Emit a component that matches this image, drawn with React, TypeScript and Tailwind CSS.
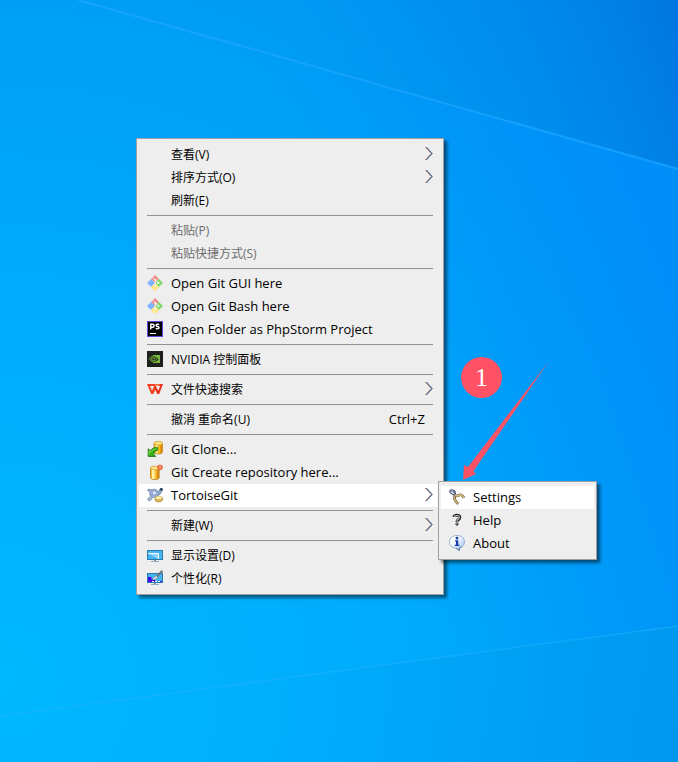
import type { ReactNode } from "react";

const icon = "h-4 w-4 shrink-0";

function GitIcon() {
  return (
    <svg className={icon} viewBox="0 0 16 16" aria-hidden="true">
      <path d="M8 0 L12 3.9 L8 7.8 L4 3.9Z" fill="#f28c8c" />
      <path d="M4 4 L8 8 L4 12 L0 8Z" fill="#80b3ff" />
      <path d="M12 4 L16 8 L12 12 L8 8Z" fill="#80d968" />
      <path d="M8 8.2 L12 12 L8 16 L4 12Z" fill="#ffe680" />
      <path d="M5.6 2.2 L8.4 5 V11 M8.4 5 L11.4 8" stroke="#f4f4f4" strokeWidth="0.9" fill="none" />
      <circle cx="8.4" cy="5" r="1" fill="#fff" />
      <circle cx="8.4" cy="11" r="1" fill="#fff" />
      <circle cx="11.4" cy="8" r="1" fill="#fff" />
    </svg>
  );
}

function PhpStormIcon() {
  return (
    <svg className={icon} viewBox="0 0 16 16" aria-hidden="true">
      <rect width="16" height="16" fill="#5a4be0" />
      <rect x="1" y="1" width="14" height="14" fill="#000" />
      <path
        d="M3.8 8.5 V3.3 H5.8 Q7.1 3.3 7.1 4.8 Q7.1 6.3 5.8 6.3 H4.2 M12.2 3.8 Q11.4 3.1 10.3 3.2 Q9.1 3.3 9.2 4.4 Q9.3 5.3 10.6 5.5 Q12.2 5.8 12.1 6.8 Q12 7.9 10.6 7.9 Q9.5 7.9 8.8 7.2"
        stroke="#fff" strokeWidth="1.4" fill="none"
      />
      <rect x="3" y="12" width="6" height="1" fill="#fff" />
    </svg>
  );
}

function NvidiaIcon() {
  return (
    <svg className={icon} viewBox="0 0 16 16" aria-hidden="true">
      <rect width="16" height="16" fill="#1d1f1d" />
      <path d="M6 4 H13 V12 H6 V11 Q10 11 11.6 8.6 Q9.6 5.5 6 5.2Z" fill="#76b43c" />
      <path d="M6 5.2 Q3.6 5.5 2.3 7.5 Q3.6 10.7 6.4 11 M6 6.7 Q4.5 6.9 4 7.7 Q4.8 9.4 6.5 9.7 Q8.6 9.8 9.8 8.4 Q8.4 6.6 6 6.7 M6.2 7.7 Q7.2 7.7 7.7 8.5" stroke="#76b43c" strokeWidth="0.9" fill="none" />
    </svg>
  );
}

function WpsIcon() {
  return (
    <svg className={icon} viewBox="0 0 16 16" aria-hidden="true">
      <path d="M0 3 H8.4 L7.6 5 H3 L5 9.8 L7.6 3.8 L9.2 7.4 L6.2 13 H4.2Z" fill="#f5411f" />
      <path d="M8.4 3 H16 L12.2 13 H10.2 L7.2 6 L8.6 4.4 L11.2 9.8 L13.2 5 H9.3Z" fill="#e8301c" />
      <path d="M8 3 H12.8 L12 5 H8.8Z" fill="#ff7448" />
    </svg>
  );
}

function CloneIcon() {
  return (
    <svg className={icon} viewBox="0 0 16 16" aria-hidden="true">
      <path d="M7 2.3 V11 Q7 13 11.3 13 Q15.6 13 15.6 11 V2.3Z" fill="#f2b91b" stroke="#ad6b08" strokeWidth="0.6" />
      <path d="M8.5 3.6 V11.8 Q9.6 12.4 10.8 12.4 V3.6Z" fill="#fff0a0" />
      <path d="M13.3 3.6 V12.3 L15.3 11 V3Z" fill="#dd8b10" />
      <ellipse cx="11.3" cy="2.2" rx="4.3" ry="1.9" fill="#ffe27a" stroke="#c58a18" strokeWidth="0.6" />
      <path d="M10.6 6.6 Q5.6 6.2 3.6 9.8 L1.2 7.8 V15.4 H8.8 L6.4 13 Q7.6 10 10.6 9.2Z" fill="#37ad18" stroke="#0f6b08" strokeWidth="0.8" />
      <path d="M9.4 7.6 Q6 7.8 4.2 11 L2.2 9.8 V13.6" stroke="#93e85c" strokeWidth="0.9" fill="none" />
    </svg>
  );
}

function CreateIcon() {
  return (
    <svg className={icon} viewBox="0 0 16 16" aria-hidden="true">
      <path d="M3.5 4 V13.5 Q3.5 15.5 7.8 15.5 Q12.2 15.5 12.2 13.5 V4Z" fill="#f4bd30" stroke="#b56f0c" strokeWidth="0.7" />
      <path d="M5 5.5 V14.4 Q6 15 7.6 15 V5.5Z" fill="#fff1a6" />
      <path d="M10 5.5 V15 L11.9 14 V4.5Z" fill="#dc8512" />
      <ellipse cx="7.8" cy="4" rx="4.3" ry="1.9" fill="#ffe488" stroke="#c98e1c" strokeWidth="0.6" />
      <path d="M13 0.4 V6.4 M10 3.4 H16 M10.8 1.2 L15.2 5.6 M15.2 1.2 L10.8 5.6" stroke="#f2562e" strokeWidth="1.2" />
      <circle cx="13" cy="3.4" r="1.1" fill="#ffb48c" />
    </svg>
  );
}

function TortoiseIcon() {
  return (
    <svg className={icon} viewBox="0 0 16 16" aria-hidden="true">
      <path d="M3.6 4.6 L0.6 3.6 L1.2 2.2 L5 3 M3 9.4 L0.6 12 L1.8 13.8 L3.8 13 L5.6 10.5" fill="#a9bdd3" stroke="#587393" strokeWidth="0.7" />
      <path d="M11.4 7 L12 3.8 Q12.4 1.2 14.4 1.2 Q16 2.2 15 4 L13 7.4Z" fill="#9db4ce" stroke="#486484" strokeWidth="0.6" />
      <circle cx="14.4" cy="2.4" r="1.3" fill="#1c3654" />
      <ellipse cx="7.2" cy="6.4" rx="4.6" ry="4" fill="#a3b6de" stroke="#6c84ae" strokeWidth="0.8" />
      <path d="M5 4.6 L7.4 3.8 L9.6 5.2 L9 7.8 L5.8 8Z" fill="#dfe7f6" stroke="#7890ba" strokeWidth="0.7" />
      <path d="M3 7.4 L5.8 8 M9 7.8 L11.4 8.4 M7.4 3.8 V2.6" stroke="#7890ba" strokeWidth="0.7" />
      <path d="M8.2 11 V13.2 Q8.2 14.8 11.6 14.8 Q15.4 14.6 15.4 12.8 V10.4Z" fill="#e6bd55" stroke="#987026" strokeWidth="0.7" />
      <ellipse cx="11.8" cy="10.8" rx="3.6" ry="1.8" fill="#fff0ad" stroke="#bd9747" strokeWidth="0.5" />
    </svg>
  );
}

function DisplayIcon() {
  return (
    <svg className={icon} viewBox="0 0 16 16" aria-hidden="true">
      <rect x="0.5" y="3.5" width="15" height="9" fill="#46b5ef" stroke="#2a7ab0" />
      <path d="M1 6.5 H11.5 V12" stroke="#fff" fill="#8fd4fa" />
      <rect x="7" y="13" width="2" height="1" fill="#8294a4" />
      <rect x="4" y="14" width="8" height="1" fill="#9aacba" />
    </svg>
  );
}

function PersonalizeIcon() {
  return (
    <svg className={icon} viewBox="0 0 16 16" aria-hidden="true">
      <rect x="0.5" y="3.5" width="15" height="9" fill="#3fb4ee" stroke="#2a7ab0" />
      <path d="M1 7 H4.5 V9.5 H8 V12 H1Z" fill="#4a00e6" />
      <path d="M5 11.5 H14" stroke="#fff" strokeDasharray="2 1" />
      <path d="M13 11.5 H15" stroke="#6b08e6" />
      <path d="M15.4 0.8 L9.2 7.2" stroke="#6d7880" strokeWidth="2.1" />
      <path d="M9.6 6 Q7 6 5.4 9.4 Q9.4 10.4 10.6 7.4Z" fill="#d9dee2" stroke="#6e7d88" strokeWidth="0.5" />
      <rect x="7" y="13" width="2" height="1" fill="#8294a4" />
      <rect x="4" y="14" width="8" height="1" fill="#9aacba" />
    </svg>
  );
}

function SettingsIcon() {
  return (
    <svg className={icon} viewBox="0 0 16 16" aria-hidden="true">
      <path d="M7 5.4 Q4.4 8.4 6 11 Q7 13.2 9.4 14.8" stroke="#735a36" strokeWidth="2.6" fill="none" />
      <path d="M7 5.4 Q4.4 8.4 6 11 Q7 13.2 9.4 14.8" stroke="#d9bd83" strokeWidth="1.4" fill="none" />
      <path d="M5.4 5.6 Q8 8 10 6.2 Q12.6 4.6 15 9" stroke="#735a36" strokeWidth="2.6" fill="none" />
      <path d="M5.4 5.6 Q8 8 10 6.2 Q12.6 4.6 15 9" stroke="#e0c58c" strokeWidth="1.4" fill="none" />
      <path d="M0.8 1.5 L2.8 0.5 L6 1.8 L6.6 5.2 L4 6 L0.7 3.4Z" fill="#7181a0" stroke="#3a435e" strokeWidth="0.8" />
      <path d="M1.5 2.8 L5.3 5 M3 1.2 L3.6 4.8" stroke="#dce5f4" strokeWidth="0.8" />
    </svg>
  );
}

function HelpIcon() {
  return (
    <svg className={icon} viewBox="0 0 16 16" aria-hidden="true">
      <path d="M5 5 Q5 3.3 8 3.3 Q11 3.4 10.8 5.6 Q10.7 7 9 7.8 Q8 8.4 8 10" stroke="#222" strokeWidth="3" fill="none" />
      <path d="M5.4 4.9 Q5.4 3.5 8 3.5 Q10.5 3.6 10.4 5.5 Q10.3 6.8 8.8 7.5 Q8 8 8 9.7" stroke="#c9c9c9" strokeWidth="1.1" fill="none" />
      <circle cx="8" cy="12.1" r="1.2" fill="#bbb" stroke="#222" strokeWidth="0.9" />
    </svg>
  );
}

function AboutIcon() {
  return (
    <svg className={icon} viewBox="0 0 16 16" aria-hidden="true">
      <defs>
        <linearGradient id="bubble" x1="0" y1="0" x2="1" y2="1">
          <stop offset="0.35" stopColor="#fff" />
          <stop offset="1" stopColor="#8eb9ed" />
        </linearGradient>
      </defs>
      <path d="M8 0.5 Q15.5 0.8 15.5 7 Q15.4 11.6 10.4 12.9 L10.6 15.6 L7 13.2 Q0.6 12.5 0.5 7 Q0.6 0.8 8 0.5Z" fill="url(#bubble)" stroke="#91abcb" strokeWidth="0.9" />
      <path d="M12.8 11.6 L10.4 12.9 L10.6 15.6 L7 13.2" stroke="#4c76ac" strokeWidth="0.9" fill="none" />
      <circle cx="8" cy="3.2" r="1.4" fill="#113da8" />
      <path d="M6 5.3 H9.2 V9.8 H10.4 V11 H5.8 V9.8 H7 V6.4 H6Z" fill="#113da8" />
    </svg>
  );
}

function Chevron() {
  return (
    <svg className="h-[17px] w-2 shrink-0" viewBox="0 0 8 17" fill="none" aria-hidden="true">
      <path d="M0.3 1 L6.2 7.5 L0.3 14" stroke="#e79a4c" strokeWidth="0.8" />
      <path d="M1.5 1 L7.4 7.5 L1.5 14" stroke="#3f94e6" strokeWidth="0.9" />
      <path d="M0.9 1 L6.8 7.5 L0.9 14" stroke="#3b2450" strokeWidth="0.7" />
    </svg>
  );
}

type ItemProps = {
  label: string;
  icon?: ReactNode;
  shortcut?: string;
  more?: boolean;
  active?: boolean;
  disabled?: boolean;
};

function Item({ label, icon: glyph, shortcut, more, active, disabled }: ItemProps) {
  const latin = /^[A-Za-z. ]+$/.test(label);
  return (
    <button
      type="button"
      role="menuitem"
      disabled={disabled}
      aria-haspopup={more ? "menu" : undefined}
      className={`flex h-[23px] w-full items-center gap-2 px-2 text-left whitespace-nowrap ${
        active ? "bg-white" : "hover:bg-white"
      } ${disabled ? "text-[#6d6d6d]" : "text-black"} ${latin ? "text-[13px]" : "text-[12px]"}`}
    >
      <span className="flex w-4 shrink-0 pb-px">{glyph}</span>
      <span className="flex-1">{label}</span>
      {shortcut && <span className="pr-2 text-[13px]">{shortcut}</span>}
      {more && <Chevron />}
    </button>
  );
}

function Separator() {
  return (
    <div role="separator" className="px-2 py-[3px]">
      <div className="h-px bg-[#919191]" />
    </div>
  );
}

function Menu({ label, className, children }: { label: string; className: string; children: ReactNode }) {
  return (
    <div
      role="menu"
      aria-label={label}
      className={`absolute border border-[#a0a0a0] bg-[#eeeeee] px-[2px] py-1 shadow-[3px_3px_3px_rgba(0,0,0,0.5)] ${className}`}
    >
      {children}
    </div>
  );
}

function Wallpaper() {
  return (
    <svg className="absolute inset-0 h-full w-full" viewBox="0 0 678 762" preserveAspectRatio="none" aria-hidden="true">
      <defs>
        <radialGradient id="base" gradientUnits="userSpaceOnUse" cx="0" cy="680" r="900">
          <stop offset="0" stopColor="#00b8ff" />
          <stop offset="0.4" stopColor="#00acfd" />
          <stop offset="0.75" stopColor="#009ff6" />
          <stop offset="1" stopColor="#0094f2" />
        </radialGradient>
        <linearGradient id="corner" gradientUnits="userSpaceOnUse" x1="300" y1="140" x2="678" y2="0">
          <stop offset="0" stopColor="#0090ee" stopOpacity="0.1" />
          <stop offset="0.6" stopColor="#0086e8" stopOpacity="0.65" />
          <stop offset="1" stopColor="#0076e0" />
        </linearGradient>
        <linearGradient id="right" gradientUnits="userSpaceOnUse" x1="380" y1="400" x2="678" y2="300">
          <stop offset="0" stopColor="#008efb" stopOpacity="0" />
          <stop offset="1" stopColor="#008cfa" stopOpacity="0.8" />
        </linearGradient>
        <linearGradient id="floor" gradientUnits="userSpaceOnUse" x1="250" y1="680" x2="678" y2="762">
          <stop offset="0" stopColor="#00a4f2" stopOpacity="0" />
          <stop offset="1" stopColor="#0094ec" stopOpacity="0.7" />
        </linearGradient>
        <linearGradient id="ray" gradientUnits="userSpaceOnUse" x1="78" y1="0" x2="678" y2="169">
          <stop offset="0" stopColor="#22a8fb" stopOpacity="0.6" />
          <stop offset="1" stopColor="#12a0ff" />
        </linearGradient>
      </defs>
      <rect width="678" height="762" fill="url(#base)" />
      <path d="M78 0 L678 169 V626 L0 716 V0Z" fill="url(#right)" />
      <path d="M78 0 L678 169 V0Z" fill="url(#corner)" />
      <path d="M0 716 L678 626 V762 H0Z" fill="url(#floor)" />
      <path d="M78 0 L678 169" stroke="url(#ray)" strokeWidth="2" />
      <path d="M0 716 L678 626" stroke="#22b4ff" strokeWidth="1.5" strokeOpacity="0.5" />
    </svg>
  );
}

export default function App() {
  return (
    <main className="relative h-screen min-h-[620px] w-full overflow-hidden bg-[#00a2fa] font-['Open_Sans','Noto_Sans_CJK_SC',sans-serif]">
      <Wallpaper />

      <Menu label="Desktop" className="top-[138px] left-[136px] w-[308px]">
        <Item label="查看(V)" more />
        <Item label="排序方式(O)" more />
        <Item label="刷新(E)" />
        <Separator />
        <Item label="粘贴(P)" disabled />
        <Item label="粘贴快捷方式(S)" disabled />
        <Separator />
        <Item label="Open Git GUI here" icon={<GitIcon />} />
        <Item label="Open Git Bash here" icon={<GitIcon />} />
        <Item label="Open Folder as PhpStorm Project" icon={<PhpStormIcon />} />
        <Separator />
        <Item label="NVIDIA 控制面板" icon={<NvidiaIcon />} />
        <Separator />
        <Item label="文件快速搜索" icon={<WpsIcon />} more />
        <Separator />
        <Item label="撤消 重命名(U)" shortcut="Ctrl+Z" />
        <Separator />
        <Item label="Git Clone..." icon={<CloneIcon />} />
        <Item label="Git Create repository here..." icon={<CreateIcon />} />
        <Item label="TortoiseGit" icon={<TortoiseIcon />} more active />
        <Separator />
        <Item label="新建(W)" more />
        <Separator />
        <Item label="显示设置(D)" icon={<DisplayIcon />} />
        <Item label="个性化(R)" icon={<PersonalizeIcon />} />
      </Menu>

      <Menu label="TortoiseGit" className="top-[481px] left-[438px] w-[159px]">
        <Item label="Settings" icon={<SettingsIcon />} active />
        <Item label="Help" icon={<HelpIcon />} />
        <Item label="About" icon={<AboutIcon />} />
      </Menu>

      <div className="absolute top-[357px] left-[461px] flex size-[41px] items-center justify-center rounded-full bg-[#ff5264] font-['Liberation_Serif',serif] text-[26px] leading-none text-white">
        1
      </div>
      <svg className="absolute top-[361px] left-[463px] h-[119px] w-[87px]" viewBox="0 0 87 119" aria-hidden="true">
        <path d="M86 0 L5 106 L1 104 L0 119 L13 113 L10.5 110Z" fill="#ff5264" />
      </svg>
    </main>
  );
}
